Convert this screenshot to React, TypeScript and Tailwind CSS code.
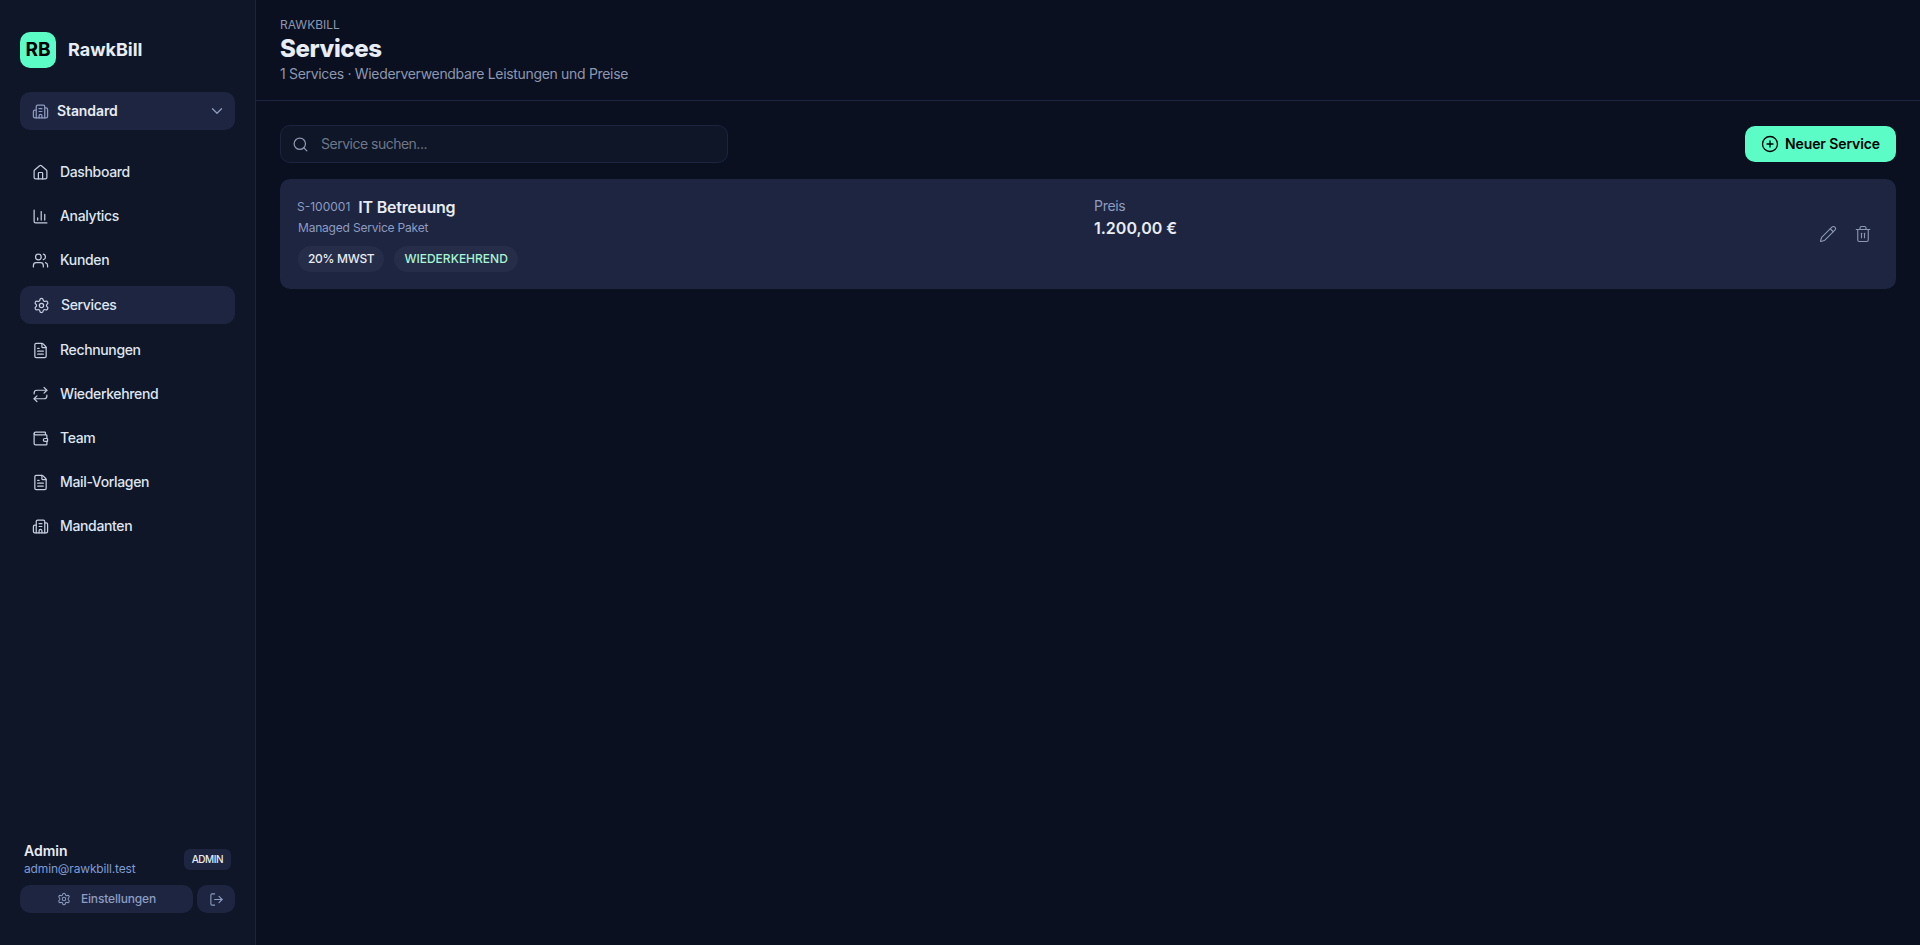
import { ChevronDown, ChartColumn, CirclePlus, FileText, House, LogOut, Pencil, Repeat, Search, Settings, Trash2, Users, Wallet, Building2 } from 'lucide-react';

const navItems = [
  { label: 'Dashboard', icon: House },
  { label: 'Analytics', icon: ChartColumn },
  { label: 'Kunden', icon: Users },
  { label: 'Services', icon: Settings, active: true },
  { label: 'Rechnungen', icon: FileText },
  { label: 'Wiederkehrend', icon: Repeat },
  { label: 'Team', icon: Wallet },
  { label: 'Mail-Vorlagen', icon: FileText },
  { label: 'Mandanten', icon: Building2 },
];

function Sidebar() {
  return (
    <aside className="flex h-[945px] w-[256px] shrink-0 flex-col border-r border-[#1c2440] bg-[#0e1627] px-5 pt-8 pb-8">
      <div className="flex items-center gap-3">
        <div className="flex h-9 w-9 items-center justify-center rounded-[10px] bg-[#5cfcc6] text-[19px] font-bold text-black">RB</div>
        <span className="text-lg font-bold text-[#e8ecf4]">RawkBill</span>
      </div>

      <button className="mt-6 flex h-[38px] items-center rounded-[10px] bg-[#1d2540] pr-[9px] pl-3 text-sm font-semibold tracking-[-0.1px] text-[#e8ecf4]">
        <Building2 className="h-[17px] w-[17px] text-[#8d9cc0]" strokeWidth={1.75} />
        <span className="ml-2">Standard</span>
        <ChevronDown className="ml-auto h-[18px] w-[18px] text-[#8d9cc0]" strokeWidth={1.75} />
      </button>

      <nav className="mt-6 flex flex-col gap-2">
        {navItems.map((item) => {
          const Icon = item.icon;
          return (
            <a
              key={item.label}
              className={
                item.active
                  ? 'flex h-[38px] items-center gap-[11px] rounded-[10px] border border-[#1d2540] bg-[#1d2540] px-3 text-sm font-medium tracking-[-0.35px] text-[#dfe5f2]'
                  : 'flex h-9 items-center gap-[11px] rounded-[10px] px-3 text-sm font-medium tracking-[-0.35px] text-[#dfe5f2]'
              }
            >
              <Icon className="h-[17px] w-[17px] shrink-0 text-[#c5cde0]" strokeWidth={1.75} />
              {item.label}
            </a>
          );
        })}
      </nav>

      <div className="mt-auto">
        <div className="flex items-center justify-between pr-1 pl-1">
          <div>
            <div className="mb-px text-sm leading-[18px] font-semibold text-[#e8ecf4]">Admin</div>
            <div className="text-xs leading-4 tracking-[-0.15px] text-[#7f9bd6]">admin@rawkbill.test</div>
          </div>
          <span className="rounded-md bg-[#1d2540] px-2 py-1 text-[10px] leading-[13px] font-medium tracking-[-0.5px] text-[#e8ecf4]">ADMIN</span>
        </div>
        <div className="mt-2 flex gap-1">
          <button className="flex h-7 flex-1 items-center justify-center gap-[10px] rounded-[10px] bg-[#1d2540] text-xs font-medium tracking-[-0.15px] text-[#8d9cc0]">
            <Settings className="h-[14px] w-[14px]" strokeWidth={1.75} />
            Einstellungen
          </button>
          <button className="flex h-7 w-[38px] items-center justify-center rounded-[10px] bg-[#1d2540] text-[#8d9cc0]">
            <LogOut className="h-[15px] w-[15px]" strokeWidth={1.75} />
          </button>
        </div>
      </div>
    </aside>
  );
}

export default function App() {
  return (
    <div className="flex h-[945px] overflow-hidden bg-[#0a1020] font-['Inter',sans-serif]">
      <Sidebar />
      <main className="min-w-0 flex-1">
        <header className="h-[101px] border-b border-[#1c2440] px-6 pt-[17px]">
          <div className="text-xs leading-4 text-[#8d97b0]">RAWKBILL</div>
          <h1 className="text-2xl leading-8 font-extrabold tracking-[-0.4px] text-[#e8ecf4]">Services</h1>
          <p className="-mt-px text-sm leading-5 tracking-[-0.32px] text-[#8d97b0]">1 Services · Wiederverwendbare Leistungen und Preise</p>
        </header>

        <div className="px-6 pt-6">
          <div className="flex items-center justify-between">
            <div className="flex h-[38px] w-[448px] items-center gap-3 rounded-[10px] border border-[#1c2440] bg-[#0e1627] px-[11px]">
              <Search className="h-[17px] w-[17px] text-[#8d97b0]" strokeWidth={1.75} />
              <span className="text-sm tracking-[-0.5px] text-[#6f7688]">Service suchen...</span>
            </div>
            <button className="flex h-9 items-center gap-[6px] rounded-[10px] bg-[#5cfcc6] px-4 text-sm font-semibold tracking-[-0.1px] text-black">
              <CirclePlus className="h-[18px] w-[18px]" strokeWidth={1.75} />
              Neuer Service
            </button>
          </div>

          <div className="mt-4 flex h-[110px] items-center rounded-[10px] bg-[#1d2540] px-[18px]">
            <div className="w-[796px] pb-[2px]">
              <div className="flex items-center gap-2">
                <span className="-ml-px pt-px text-xs text-[#8d9cc0]">S-100001</span>
                <span className="text-base font-semibold tracking-[-0.2px] text-[#e8ecf4]">IT Betreuung</span>
              </div>
              <div className="mt-px text-xs leading-4 tracking-[-0.2px] text-[#8d9cc0]">Managed Service Paket</div>
              <div className="mt-[10px] flex gap-[10px]">
                <span className="rounded-full bg-[#252d48] px-[10px] py-[5px] text-xs leading-4 font-medium tracking-[-0.3px] text-[#e8ecf4]">20% MWST</span>
                <span className="rounded-full bg-[#252d48] px-[10px] py-[5px] text-xs leading-4 font-medium text-[#a8f5d4]">WIEDERKEHREND</span>
              </div>
            </div>
            <div className="self-start pt-[19px]">
              <div className="text-sm leading-4 tracking-[-0.3px] text-[#8d9cc0]">Preis</div>
              <div className="mt-[2px] text-base leading-6 font-semibold text-[#e8ecf4]">1.200,00 €</div>
            </div>
            <div className="ml-auto flex items-center gap-[17.5px] pr-[6px] text-[#8d97b0]">
              <Pencil className="h-[18px] w-[18px]" strokeWidth={1.5} />
              <Trash2 className="h-[18px] w-[18px]" strokeWidth={1.5} />
            </div>
          </div>
        </div>
      </main>
    </div>
  );
}
